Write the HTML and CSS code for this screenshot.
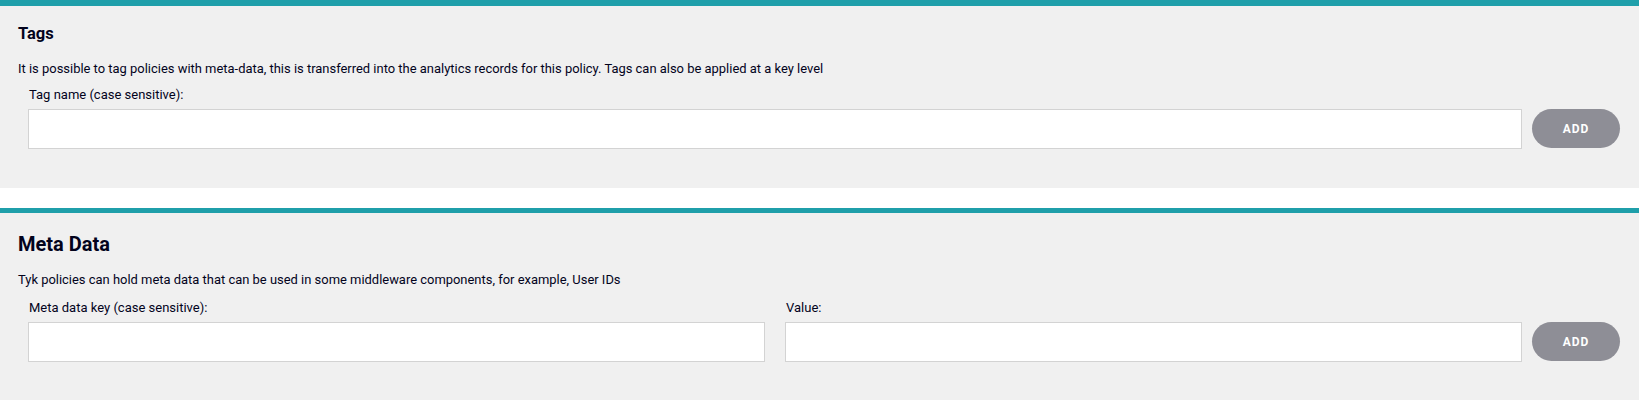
FILE: index.html
```html
<!DOCTYPE html>
<html lang="en">
<head>
<meta charset="utf-8">
<title>Policy tags and meta data</title>
<link rel="stylesheet" href="styles.css">
</head>
<body>
  <section class="panel panel-tags">
    <h4 class="panel-title small">Tags</h4>
    <p class="panel-desc">It is possible to tag policies with meta-data, this is transferred into the analytics records for this policy. Tags can also be applied at a key level</p>
    <div class="form-row">
      <div class="fields one">
        <label class="field">
          <span class="field-label">Tag name (case sensitive):</span>
          <input class="field-input" type="text">
        </label>
      </div>
      <button class="btn-add" type="button">ADD</button>
    </div>
  </section>
  <div class="spacer"></div>
  <section class="panel panel-meta">
    <h3 class="panel-title large">Meta Data</h3>
    <p class="panel-desc">Tyk policies can hold meta data that can be used in some middleware components, for example, User IDs</p>
    <div class="form-row">
      <div class="fields two">
        <label class="field">
          <span class="field-label">Meta data key (case sensitive):</span>
          <input class="field-input" type="text">
        </label>
        <label class="field">
          <span class="field-label">Value:</span>
          <input class="field-input" type="text">
        </label>
      </div>
      <button class="btn-add" type="button">ADD</button>
    </div>
  </section>
</body>
</html>
```
FILE: styles.css
```css
html, body {
  margin: 0;
  padding: 0;
  background: #ffffff;
}
body {
  font-family: Roboto, "Liberation Sans", Arial, sans-serif;
  color: #03031c;
}
.panel {
  background: #f0f0f0;
  border-top: 5px solid #1f9faa;
  padding: 0 19px 0 18px;
}
.panel-tags {
  border-top-width: 6px;
  padding-top: 18px;
  padding-bottom: 39px;
}
.panel-meta {
  padding-top: 19px;
  padding-bottom: 40px;
}
.spacer {
  height: 20px;
}
.panel-title {
  margin: 0;
  font-weight: 700;
  color: #03031c;
}
.panel-title.small {
  font-size: 16.5px;
  line-height: 20px;
}
.panel-title.large {
  font-size: 20px;
  line-height: 24px;
}
.panel-desc {
  margin: 16px 0 0;
  font-size: 12.95px;
  line-height: 18px;
}
.panel-meta .panel-desc {
  margin-top: 15px;
}
.form-row {
  display: flex;
  gap: 10px;
  align-items: flex-end;
  padding-left: 10px;
  margin-top: 8px;
}
.panel-meta .form-row {
  margin-top: 10px;
}
.fields {
  flex: 1;
  display: grid;
  gap: 20px;
}
.fields.one {
  grid-template-columns: 1fr;
}
.fields.two {
  grid-template-columns: 1fr 1fr;
}
.field {
  display: flex;
  flex-direction: column;
  gap: 5px;
}
.field-label {
  font-size: 13px;
  line-height: 18px;
  padding-left: 1px;
}
.field-input {
  box-sizing: border-box;
  height: 40px;
  margin: 0;
  background: #ffffff;
  border: 1px solid #d3d3d3;
  border-radius: 0;
  padding: 0 10px;
  font: inherit;
  outline: none;
}
.btn-add {
  box-sizing: border-box;
  width: 88px;
  height: 39px;
  margin-bottom: 1px;
  border: none;
  border-radius: 20px;
  background: #8e8e96;
  color: #ffffff;
  font-family: Roboto, "Liberation Sans", Arial, sans-serif;
  font-size: 12px;
  font-weight: 700;
  letter-spacing: 1px;
  padding: 0;
  cursor: pointer;
}
```
